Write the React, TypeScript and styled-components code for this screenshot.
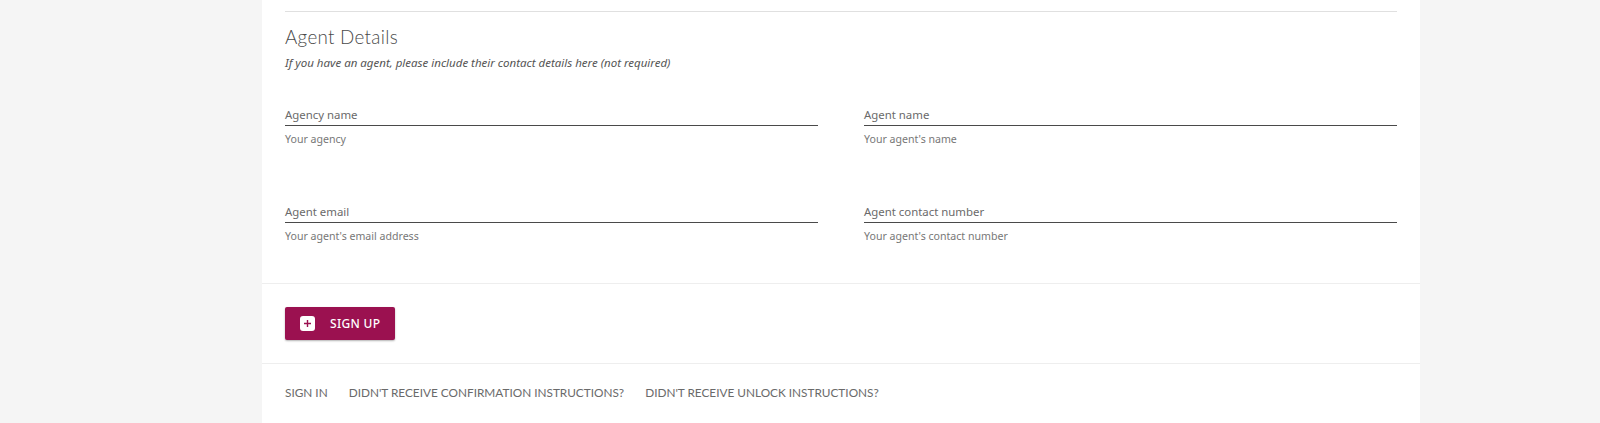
import styled, { createGlobalStyle } from 'styled-components';

const GlobalStyle = createGlobalStyle`
  html, body {
    margin: 0;
    height: 423px;
    overflow: hidden;
    background: #f5f5f5;
    font-family: 'Noto Sans', sans-serif;
    color: #4a4a4a;
  }
`;

const Card = styled.main`
  width: 1158px;
  height: 423px;
  margin-left: 262px;
  background: #fff;
`;

const Section = styled.section`
  padding: 11px 23px 0;
`;

const Divider = styled.div`
  height: 1px;
  background: #e0e0e0;
`;

const Title = styled.h2`
  margin: 13px 0 0;
  font-family: Lato, sans-serif;
  font-size: 18.8px;
  line-height: 24px;
  font-weight: 300;
  letter-spacing: 0.3px;
  color: #4a4a4a;
`;

const Note = styled.p`
  margin: 6px 0 0;
  font-size: 11.5px;
  line-height: 16px;
  font-style: italic;
  color: #555;
`;

const FieldGrid = styled.div`
  display: grid;
  grid-template-columns: 1fr 1fr;
  grid-auto-rows: 62px;
  column-gap: 46px;
  row-gap: 35px;
  margin-top: 35px;
  height: 177px;
`;

const Field = styled.div``;

const Label = styled.label`
  display: block;
  height: 18px;
  font-size: 11.4px;
  line-height: 18px;
  color: #6a6a6a;
  border-bottom: 1px solid #4a4a4a;
  padding-bottom: 1px;
`;

const Hint = styled.div`
  margin-top: 5px;
  font-size: 10.6px;
  line-height: 16px;
  color: #777;
`;

const Actions = styled.div`
  border-top: 1px solid #eeeeee;
  padding: 23px;
`;

const SignUp = styled.button`
  display: flex;
  align-items: center;
  gap: 15px;
  width: 110px;
  height: 33px;
  padding: 0 0 0 15px;
  border: 0;
  border-radius: 2px;
  background: #9b1150;
  box-shadow: 0 1px 2px rgba(0, 0, 0, 0.3);
  color: #fff;
  font-family: 'Noto Sans', sans-serif;
  font-size: 12px;
  font-weight: 500;
  letter-spacing: 0.3px;
`;

const PlusIcon = styled.svg`
  width: 15px;
  height: 15px;
  flex: none;
`;

const Links = styled.nav`
  display: flex;
  gap: 21px;
  border-top: 1px solid #eeeeee;
  padding: 21px 23px 0;
`;

const LinkItem = styled.a`
  font-family: Lato, sans-serif;
  font-size: 11.8px;
  line-height: 16px;
  color: #6a6a6a;
`;

const fields = [
  { label: 'Agency name', hint: 'Your agency' },
  { label: 'Agent name', hint: "Your agent's name" },
  { label: 'Agent email', hint: "Your agent's email address" },
  { label: 'Agent contact number', hint: "Your agent's contact number" },
];

const App = () => (
  <Card>
    <GlobalStyle />
    <Section>
      <Divider />
      <Title>Agent Details</Title>
      <Note>If you have an agent, please include their contact details here (not required)</Note>
      <FieldGrid>
        {fields.map(field => (
          <Field key={field.label}>
            <Label>{field.label}</Label>
            <Hint>{field.hint}</Hint>
          </Field>
        ))}
      </FieldGrid>
    </Section>
    <Actions>
      <SignUp>
        <PlusIcon viewBox="0 0 15 15">
          <rect width="15" height="15" rx="3" fill="#fff" />
          <path d="M7.5 4v7M4 7.5h7" stroke="#9b1150" strokeWidth="1.4" />
        </PlusIcon>
        SIGN UP
      </SignUp>
    </Actions>
    <Links>
      <LinkItem>SIGN IN</LinkItem>
      <LinkItem>DIDN'T RECEIVE CONFIRMATION INSTRUCTIONS?</LinkItem>
      <LinkItem>DIDN'T RECEIVE UNLOCK INSTRUCTIONS?</LinkItem>
    </Links>
  </Card>
);

export default App;
